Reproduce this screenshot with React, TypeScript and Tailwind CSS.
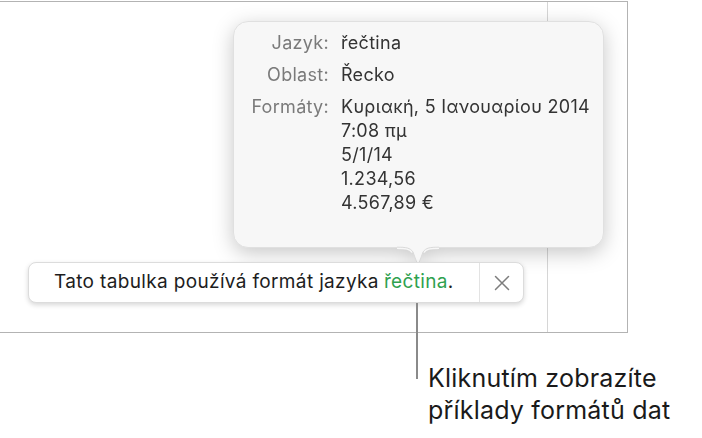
import React from "react";

const formats = ["Κυριακή, 5 Ιανουαρίου 2014", "7:08 πμ", "5/1/14", "1.234,56", "4.567,89 €"];

function Row({ label, children }: { label: string; children: React.ReactNode }) {
  return (
    <>
      <div className="text-right text-[#7a7a7a]">{label}</div>
      <div className="text-[#333333]">{children}</div>
    </>
  );
}

// Popover listing the language, region and sample formats.
function FormatsPopover() {
  return (
    <div className="absolute left-[233px] top-[21px] w-[371px] drop-shadow-[0_5px_10px_rgba(0,0,0,0.22)]">
      <div className="h-[227px] rounded-[15px] bg-[#f7f7f7] border border-[#e0e0e0] pt-[9px]">
        <div className="grid grid-cols-[95px_1fr] gap-x-[12px] gap-y-[8px] text-[18px] leading-[24px] tracking-[0.3px]">
          <Row label="Jazyk:">řečtina</Row>
          <Row label="Oblast:">Řecko</Row>
          <Row label="Formáty:">
            {formats.map((f) => (
              <div key={f}>{f}</div>
            ))}
          </Row>
        </div>
      </div>
      <svg className="absolute left-[164px] top-[225px]" width="42" height="22" viewBox="0 0 42 22">
        <path d="M0 0 C9 0 13 1 16 6 L20 17 Q21 19.5 22 17 L26 6 C29 1 33 0 42 0 Z" fill="#f7f7f7" />
        <path d="M0 1.5 C9 1.5 13 2 16 6 M26 6 C29 2 33 1.5 42 1.5" fill="none" stroke="#f7f7f7" strokeWidth="3" />
        <path
          d="M0 1.2 C9 1.2 13 1.7 16 6 L20 17 Q21 19.5 22 17 L26 6 C29 1.7 33 1.2 42 1.2"
          fill="none"
          stroke="#dadada"
          strokeWidth="1"
        />
      </svg>
    </div>
  );
}

// Banner that announces the table's language format.
function LanguageBar() {
  return (
    <div className="absolute left-[28px] top-[262px] w-[496px] h-[41px] flex items-stretch rounded-[8px] bg-white border border-[#dcdcdc] shadow-[0_2px_5px_rgba(0,0,0,0.16)]">
      <div className="flex-1 flex items-center pl-[25px] text-[19px] tracking-[0.35px] text-[#1d1d1d]">
        Tato tabulka používá formát jazyka <span className="text-[#2fa14f] ml-[5px]">řečtina</span>.
      </div>
      <div className="w-[44px] border-l border-[#e3e3e3] flex items-center justify-center">
        <svg width="16" height="16" viewBox="0 0 16 16">
          <path d="M1.5 1.5 L14.5 14.5 M14.5 1.5 L1.5 14.5" stroke="#7d7d7d" strokeWidth="1.5" strokeLinecap="round" />
        </svg>
      </div>
    </div>
  );
}

export default function App() {
  return (
    <div
      className="relative w-[702px] h-[438px] bg-white overflow-hidden"
      style={{ fontFamily: "Inter, 'Noto Sans', 'Liberation Sans', sans-serif" }}
    >
      <div className="mt-[1px] w-[628px] h-[332px] border border-l-0 border-[#b3b3b3] flex">
        <div className="w-[548px] border-r border-[#d6d6d6]" />
      </div>

      <FormatsPopover />
      <LanguageBar />

      <div className="absolute left-[416px] top-[303px] w-[2px] h-[76px] bg-[#8a8a8a]" />
      <div className="absolute left-[428px] top-[362px] text-[25px] leading-[32px] tracking-[0.2px] text-[#1a1a1a]">
        <div>Kliknutím zobrazíte</div>
        <div>příklady formátů dat</div>
      </div>
    </div>
  );
}
